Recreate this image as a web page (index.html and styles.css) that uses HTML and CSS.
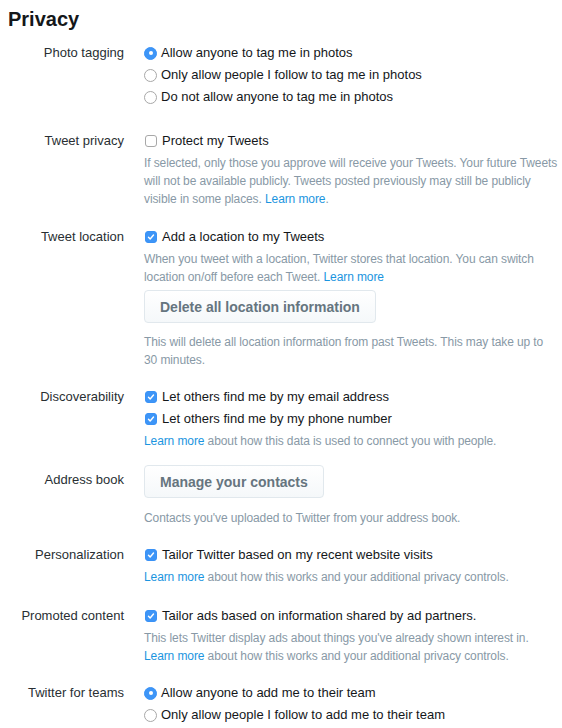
FILE: index.html
```html
<!DOCTYPE html>
<html lang="en">
<head>
<meta charset="utf-8">
<title>Privacy</title>
<link rel="stylesheet" href="styles.css">
</head>
<body>
<div class="page">
  <h2 class="title">Privacy</h2>

  <div class="row row-radios">
    <div class="label">Photo tagging</div>
    <div class="controls">
      <div class="opt"><span class="radio on"></span>Allow anyone to tag me in photos</div>
      <div class="opt"><span class="radio"></span>Only allow people I follow to tag me in photos</div>
      <div class="opt"><span class="radio"></span>Do not allow anyone to tag me in photos</div>
    </div>
  </div>

  <div class="row">
    <div class="label">Tweet privacy</div>
    <div class="controls">
      <div class="opt"><span class="check"></span>Protect my Tweets</div>
      <p class="help">If selected, only those you approve will receive your Tweets. Your future Tweets will not be available publicly. Tweets posted previously may still be publicly visible in some places. <a href="#">Learn more</a>.</p>
    </div>
  </div>

  <div class="row row-location">
    <div class="label">Tweet location</div>
    <div class="controls">
      <div class="opt"><span class="check on"><svg viewBox="0 0 12 12"><path d="M3 6.2l2 2.1 4-4.6"/></svg></span>Add a location to my Tweets</div>
      <p class="help">When you tweet with a location, Twitter stores that location. You can switch location on/off before each Tweet. <a href="#">Learn more</a></p>
      <button class="btn btn-delete" type="button">Delete all location information</button>
      <p class="help help-after">This will delete all location information from past Tweets. This may take up to 30&nbsp;minutes.</p>
    </div>
  </div>

  <div class="row row-discover">
    <div class="label">Discoverability</div>
    <div class="controls">
      <div class="opt"><span class="check on"><svg viewBox="0 0 12 12"><path d="M3 6.2l2 2.1 4-4.6"/></svg></span>Let others find me by my email address</div>
      <div class="opt"><span class="check on"><svg viewBox="0 0 12 12"><path d="M3 6.2l2 2.1 4-4.6"/></svg></span>Let others find me by my phone number</div>
      <p class="help"><a href="#">Learn more</a> about how this data is used to connect you with people.</p>
    </div>
  </div>

  <div class="row row-book">
    <div class="label label-book">Address book</div>
    <div class="controls">
      <button class="btn" type="button">Manage your contacts</button>
      <p class="help help-book">Contacts you've uploaded to Twitter from your address book.</p>
    </div>
  </div>

  <div class="row row-personal">
    <div class="label">Personalization</div>
    <div class="controls">
      <div class="opt"><span class="check on"><svg viewBox="0 0 12 12"><path d="M3 6.2l2 2.1 4-4.6"/></svg></span>Tailor Twitter based on my recent website visits</div>
      <p class="help"><a href="#">Learn more</a> about how this works and your additional privacy controls.</p>
    </div>
  </div>

  <div class="row row-promoted">
    <div class="label">Promoted content</div>
    <div class="controls">
      <div class="opt"><span class="check on"><svg viewBox="0 0 12 12"><path d="M3 6.2l2 2.1 4-4.6"/></svg></span>Tailor ads based on information shared by ad partners.</div>
      <p class="help">This lets Twitter display ads about things you've already shown interest in. <a href="#">Learn more</a> about how this works and your additional privacy controls.</p>
    </div>
  </div>

  <div class="row">
    <div class="label">Twitter for teams</div>
    <div class="controls">
      <div class="opt"><span class="radio on"></span>Allow anyone to add me to their team</div>
      <div class="opt"><span class="radio"></span>Only allow people I follow to add me to their team</div>
    </div>
  </div>
</div>
</body>
</html>
```

FILE: styles.css
```css
html, body {
  margin: 0;
  padding: 0;
  background: #ffffff;
}

body {
  font-family: "Liberation Sans", Arial, Helvetica, sans-serif;
  font-size: 13px;
  color: #14171a;
}

.page {
  padding: 8px 0 0 8px;
}

.title {
  margin: 0 0 12px 0;
  font-size: 20px;
  line-height: 22px;
  font-weight: bold;
  color: #14171a;
}

.row {
  display: grid;
  grid-template-columns: 116px 1fr;
  column-gap: 20px;
  margin-bottom: 18px;
  width: 552px;
}

.row-radios {
  margin-bottom: 22px;
}

.row-location {
  margin-bottom: 17px;
}

.row-discover {
  margin-bottom: 15px;
}

.row-book {
  margin-bottom: 17px;
}

.row-personal {
  margin-bottom: 19px;
}

.row-promoted {
  margin-bottom: 17px;
}

.label {
  text-align: right;
  line-height: 22px;
  color: #292f33;
}

.label-book {
  padding-top: 4px;
}

.controls {
  display: flex;
  flex-direction: column;
  align-items: flex-start;
}

.opt {
  display: flex;
  align-items: center;
  line-height: 22px;
  height: 22px;
  color: #14171a;
}

.radio {
  box-sizing: border-box;
  width: 13px;
  height: 13px;
  border-radius: 50%;
  border: 1px solid #a8a8a8;
  background: #ffffff;
  margin-right: 4px;
  flex: none;
  display: flex;
  align-items: center;
  justify-content: center;
}

.radio.on {
  border-color: #3a92f6;
  background: #3d95f7;
}

.radio.on::after {
  content: "";
  width: 4px;
  height: 4px;
  border-radius: 50%;
  background: #ffffff;
}

.check {
  box-sizing: border-box;
  width: 12px;
  height: 12px;
  border-radius: 3px;
  border: 1px solid #a8a8a8;
  background: #ffffff;
  margin: 0 5px 0 1px;
  flex: none;
  display: flex;
  align-items: center;
  justify-content: center;
}

.check.on {
  border-color: #3a92f6;
  background: #3d95f7;
}

.check svg {
  width: 12px;
  height: 12px;
  fill: none;
  stroke: #ffffff;
  stroke-width: 1.7;
  stroke-linecap: round;
  stroke-linejoin: round;
}

.help {
  margin: 2px 0 0 0;
  font-size: 12px;
  line-height: 18px;
  letter-spacing: -0.1px;
  color: #8899a6;
}

.help a {
  color: #1b95e0;
  text-decoration: none;
}

.help-after {
  margin-top: 10px;
}

.help-book {
  margin-top: 11px;
}

.btn {
  margin-top: 4px;
  box-sizing: border-box;
  height: 33px;
  padding: 0 15px;
  border: 1px solid #e1e8ed;
  border-radius: 4px;
  background: linear-gradient(#ffffff, #f5f8fa);
  font-family: "Liberation Sans", Arial, Helvetica, sans-serif;
  font-size: 14px;
  font-weight: bold;
  color: #66757f;
  cursor: pointer;
}

.row-book .btn {
  margin-top: 0;
}
```
